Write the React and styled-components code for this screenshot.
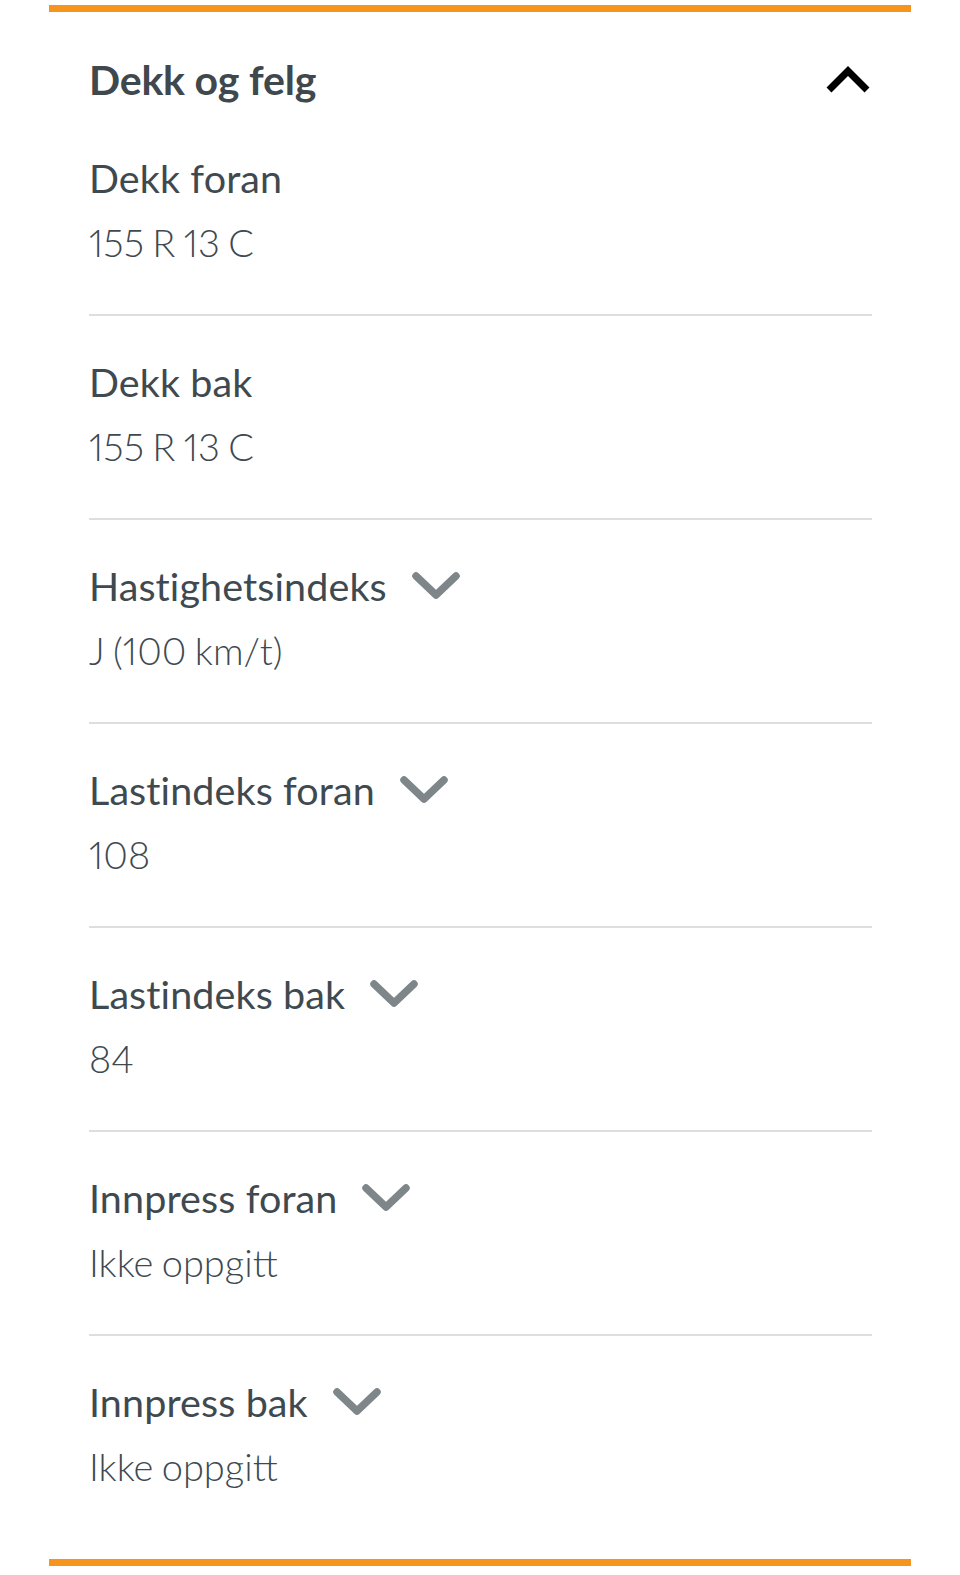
import React from "react";
import styled, { createGlobalStyle } from "styled-components";

const Global = createGlobalStyle`
  html, body { margin: 0; padding: 0; background: #ffffff; }
  body { font-family: Lato, "Open Sans", sans-serif; }
`;

const Card = styled.section`
  margin: 5px 49px 0 49px;
  border-top: 7px solid #f7941d;
  border-bottom: 7px solid #f7941d;
  padding: 0 39px 21px 40px;
  background: #fff;
`;

const Header = styled.header`
  display: flex;
  align-items: center;
  justify-content: space-between;
  padding: 46px 0 9.5px;
`;

const Title = styled.h2`
  margin: 0;
  font-size: 41px;
  line-height: 44px;
  font-weight: 700;
  color: #3f484d;
  letter-spacing: -0.2px;
`;

const IconButton = styled.button`
  border: 0;
  background: none;
  padding: 0;
  margin-right: 1px;
  display: flex;
  cursor: pointer;
`;

const Row = styled.div`
  padding: 42px 0 48px;
  border-bottom: 2px solid #dedede;
  &:last-child { border-bottom: 0; }
`;

const Label = styled.div`
  display: flex;
  align-items: center;
  gap: 24px;
  font-size: 39.5px;
  line-height: 48px;
  font-weight: 400;
  color: #3e4950;
  letter-spacing: 0.1px;
`;

const Value = styled.div`
  margin-top: 16px;
  font-size: 38px;
  line-height: 48px;
  font-weight: 300;
  color: #3e4950;
  font-variant-numeric: proportional-nums;
  word-spacing: -2px;
`;

const ChevronUp = () => (
  <svg width="46" height="28" viewBox="0 0 46 28">
    <path d="M4 24 L23 5 L42 24" fill="none" stroke="#000" strokeWidth="7" strokeLinejoin="miter" />
  </svg>
);

const ChevronDown = () => (
  <svg width="50" height="30" viewBox="0 0 50 30">
    <path d="M5 5 L25 24 L45 5" fill="none" stroke="#7e8689" strokeWidth="7.5" strokeLinecap="round" strokeLinejoin="round" />
  </svg>
);

const rows = [
  { label: "Dekk foran", value: "155 R 13 C" },
  { label: "Dekk bak", value: "155 R 13 C" },
  { label: "Hastighetsindeks", value: "J (100 km/t)", info: true },
  { label: "Lastindeks foran", value: "108", info: true },
  { label: "Lastindeks bak", value: "84", info: true },
  { label: "Innpress foran", value: "Ikke oppgitt", info: true },
  { label: "Innpress bak", value: "Ikke oppgitt", info: true },
];

export default function App() {
  return (
    <>
      <Global />
      <Card>
        <Header>
          <Title>Dekk og felg</Title>
          <IconButton aria-label="Lukk">
            <ChevronUp />
          </IconButton>
        </Header>
        {rows.map((r) => (
          <Row key={r.label}>
            <Label>
              {r.label}
              {r.info && <ChevronDown />}
            </Label>
            <Value>{r.value}</Value>
          </Row>
        ))}
      </Card>
    </>
  );
}
